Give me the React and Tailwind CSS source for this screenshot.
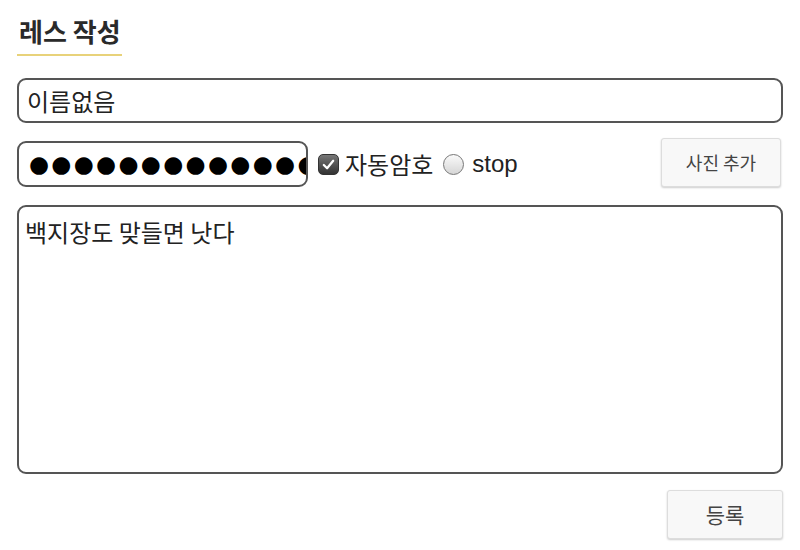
import React from "react";

const KR = { fontFamily: '"Noto Sans CJK KR", "Noto Sans", sans-serif' };

function CheckMark() {
  return (
    <span className="inline-flex h-[21px] w-[21px] items-center justify-center rounded-[5px] border border-[#333] bg-gradient-to-b from-[#777] to-[#333]">
      <svg width="15" height="15" viewBox="0 0 16 16">
        <path d="M3 8.5 L6.5 12 L13 4" fill="none" stroke="#fff" strokeWidth="2.4" strokeLinecap="round" strokeLinejoin="round" />
      </svg>
    </span>
  );
}

function Radio() {
  return (
    <span className="inline-block h-[21px] w-[21px] rounded-full border border-[#777] bg-gradient-to-b from-[#fafafa] to-[#d6d6d6]" />
  );
}

export default function App() {
  return (
    <div className="min-h-[550px] bg-white px-[17px] pt-[15px] text-[#222]" style={KR}>
      {/* heading with underline */}
      <div className="inline-block pl-[2px] pr-[1px] pb-[7px] border-b-2 border-[#e8d27a]">
        <h1 className="text-[26px] font-bold leading-[32px] text-[#2a2a2a]">레스 작성</h1>
      </div>

      {/* name */}
      <div className="mt-[22px] flex h-[45px] items-center rounded-[9px] border-2 border-[#555] px-[8px] text-[24px]">
        이름없음
      </div>

      {/* password + options + photo */}
      <div className="mt-[15px] flex items-center">
        <div className="mt-[3px] flex h-[46px] w-[291px] items-center overflow-hidden whitespace-nowrap rounded-[9px] border-2 border-[#555] pl-[10px]">
          <span className="text-[23px] leading-none tracking-[2.3px] text-black" style={{ fontFamily: '"DejaVu Sans", sans-serif' }}>
            ●●●●●●●●●●●●●●
          </span>
        </div>
        <label className="ml-[10px] mt-[3px] flex items-center gap-[6px] text-[24px]">
          <CheckMark />
          <span>자동암호</span>
        </label>
        <label className="ml-[10px] mt-[3px] flex items-center gap-[8px] text-[24px]">
          <Radio />
          <span style={{ fontFamily: '"Liberation Sans", Arial, sans-serif' }}>stop</span>
        </label>
        <button className="ml-auto mr-[2px] h-[49px] w-[120px] rounded-[3px] border border-[#ddd] bg-[#f8f8f8] text-[18px] text-[#444] shadow-[0_1px_2px_rgba(0,0,0,0.2)]">
          사진 추가
        </button>
      </div>

      {/* body */}
      <div className="mt-[18px] h-[269px] rounded-[9px] border-2 border-[#555] px-[6px] pt-[9px] text-[24px] leading-[32px]">
        백지장도 맞들면 낫다
      </div>

      <div className="mt-[16px] flex justify-end">
        <button className="h-[49px] w-[116px] rounded-[3px] border border-[#ddd] bg-[#f8f8f8] text-[21px] text-[#444] shadow-[0_1px_2px_rgba(0,0,0,0.2)]">
          등록
        </button>
      </div>
    </div>
  );
}
